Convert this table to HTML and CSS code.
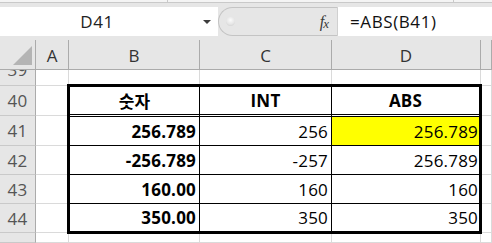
FILE: index.html
```html
<!DOCTYPE html>
<html lang="ko">
<head>
<meta charset="utf-8">
<title>ABS</title>
<link rel="stylesheet" href="styles.css">
</head>
<body>
<div class="top"><i class="sep sep1"></i><i class="sep sep2"></i></div>
<div class="fbar">
  <div class="namebox"><span class="ref">D41</span><span class="caret"></span></div>
  <div class="pill"><span class="grip"></span><span class="fx"><i>f</i><i class="x">x</i></span></div>
  <div class="formula">=ABS(B41)</div>
</div>
<div class="sheet">
  <div class="corner"><span class="tri"></span></div>
  <div class="ch">A</div><div class="ch">B</div><div class="ch">C</div><div class="ch">D</div><div class="ch"></div>

  <div class="rh r39"><span>39</span></div><div class="c"></div><div class="c"></div><div class="c"></div><div class="c"></div><div class="c"></div>

  <div class="tbl">
    <div class="t hd">숫자</div><div class="t hd">INT</div><div class="t hd last">ABS</div>
    <div class="t b">256.789</div><div class="t n">256</div><div class="t n last yel">256.789</div>
    <div class="t b">-256.789</div><div class="t n">-257</div><div class="t n last">256.789</div>
    <div class="t b">160.00</div><div class="t n">160</div><div class="t n last">160</div>
    <div class="t b end">350.00</div><div class="t n end">350</div><div class="t n last end">350</div>
  </div>

  <div class="rh">40</div><div class="c"></div><div class="c"></div>
  <div class="rh">41</div><div class="c"></div><div class="c"></div>
  <div class="rh">42</div><div class="c"></div><div class="c"></div>
  <div class="rh">43</div><div class="c"></div><div class="c"></div>
  <div class="rh">44</div><div class="c"></div><div class="c"></div>
  <div class="rh"></div><div class="c"></div><div class="c"></div><div class="c"></div><div class="c"></div><div class="c"></div>
</div>
</body>
</html>
```
FILE: styles.css
```css
html, body {
  margin: 0;
  padding: 0;
}
body {
  width: 492px;
  height: 243px;
  overflow: hidden;
  background: #fff;
  font-family: "Open Sans", "Noto Sans", sans-serif;
  color: #000;
}
.top {
  height: 2px;
  background: #f4f4f4;
  border-bottom: 1px solid #c9c9c9;
  display: flex;
}
.sep {
  width: 1px;
  height: 2px;
  background: #c9c9c9;
}
.sep1 { margin-left: 167px; }
.sep2 { margin-left: 285px; }

.fbar {
  display: flex;
  height: 37px;
  box-sizing: border-box;
  padding: 4px 0 4px;
  background: #e6e6e6;
}
.namebox {
  width: 218px;
  background: #fff;
  display: flex;
  align-items: center;
}
.ref {
  width: 194px;
  text-align: center;
  font-size: 17px;
  letter-spacing: 0.6px;
  color: #222;
}
.caret {
  margin-left: 9px;
  width: 0;
  height: 0;
  border-left: 4px solid transparent;
  border-right: 4px solid transparent;
  border-top: 4px solid #3c3c3c;
}
.pill {
  width: 120px;
  box-sizing: border-box;
  background: #e6e6e6;
  border: 1px solid #c4c4c4;
  border-right-color: #d0d0d0;
  border-radius: 15px 0 0 15px;
  display: flex;
  align-items: center;
}
.grip {
  width: 9px;
  height: 9px;
  margin-left: 7px;
  border-radius: 50%;
  background: radial-gradient(circle at 50% 35%, #fbfbfb 0%, #e6e6e6 55%, #c8c8c8 100%);
}
.fx {
  margin-left: auto;
  margin-right: 9px;
  font-family: "Liberation Serif", "DejaVu Serif", serif;
  font-size: 16px;
  color: #3a3a3a;
  letter-spacing: -1px;
}
.fx .x {
  font-size: 13px;
  position: relative;
  top: 1px;
}
.formula {
  flex: 1;
  background: #fff;
  padding-left: 12px;
  display: flex;
  align-items: center;
  font-size: 17px;
  letter-spacing: 0.6px;
  color: #111;
}

.sheet {
  display: grid;
  grid-template-columns: 36px 33px 131px 132px 149px 1fr;
  grid-template-rows: 30px 16px 30px 30px 29px 29px 29px 1fr;
  height: 203px;
  font-size: 17px;
}
.corner, .ch, .rh, .c {
  box-sizing: border-box;
}
.corner {
  background: #e6e6e6;
  border-right: 1px solid #ababab;
  border-bottom: 1px solid #ababab;
  display: flex;
  align-items: flex-end;
  justify-content: flex-end;
  padding: 0 3px 4px 0;
}
.tri {
  width: 0;
  height: 0;
  border-left: 19px solid transparent;
  border-bottom: 19px solid #b4b4b4;
}
.ch {
  background: #e6e6e6;
  border-right: 1px solid #ababab;
  border-bottom: 1px solid #ababab;
  display: flex;
  align-items: center;
  justify-content: center;
  color: #333;
  padding-top: 2px;
}
.rh {
  background: #e6e6e6;
  border-right: 1px solid #ababab;
  border-bottom: 1px solid #c9c9c9;
  display: flex;
  align-items: center;
  justify-content: center;
  color: #555;
  letter-spacing: 0.2px;
}
.r39 {
  align-items: flex-end;
  overflow: hidden;
}
.r39 span {
  flex: none;
  line-height: 30px;
  height: 30px;
  margin-bottom: 0;
}
.c {
  border-right: 1px solid #dadada;
  border-bottom: 1px solid #dadada;
}

.tbl {
  grid-column: 3 / 6;
  grid-row: 3 / 8;
  margin: -2px -1px -1px -2px;
  border: 3px solid #000;
  background: #fff;
  display: grid;
  grid-template-columns: 130px 132px 147px;
  grid-template-rows: 30px 29px 29px 29px 27px;
  z-index: 1;
}
.t {
  box-sizing: border-box;
  border-right: 1px solid #000;
  border-bottom: 1px solid #000;
  display: flex;
  align-items: center;
  justify-content: flex-end;
  padding-right: 3px;
  letter-spacing: 0.2px;
}
.t.last {
  border-right: 0;
  padding-right: 1px;
}
.t.end {
  border-bottom: 0;
}
.hd {
  justify-content: center;
  font-weight: 700;
  border-bottom: 3px double #000;
  padding: 0;
  padding-bottom: 1px;
}
.hd.last { padding: 0; }
.hd:first-child {
  font-family: "Noto Sans CJK KR", sans-serif;
  font-size: 17px;
}
.b {
  font-weight: 700;
}
.yel {
  background: #ffff00;
}
```
